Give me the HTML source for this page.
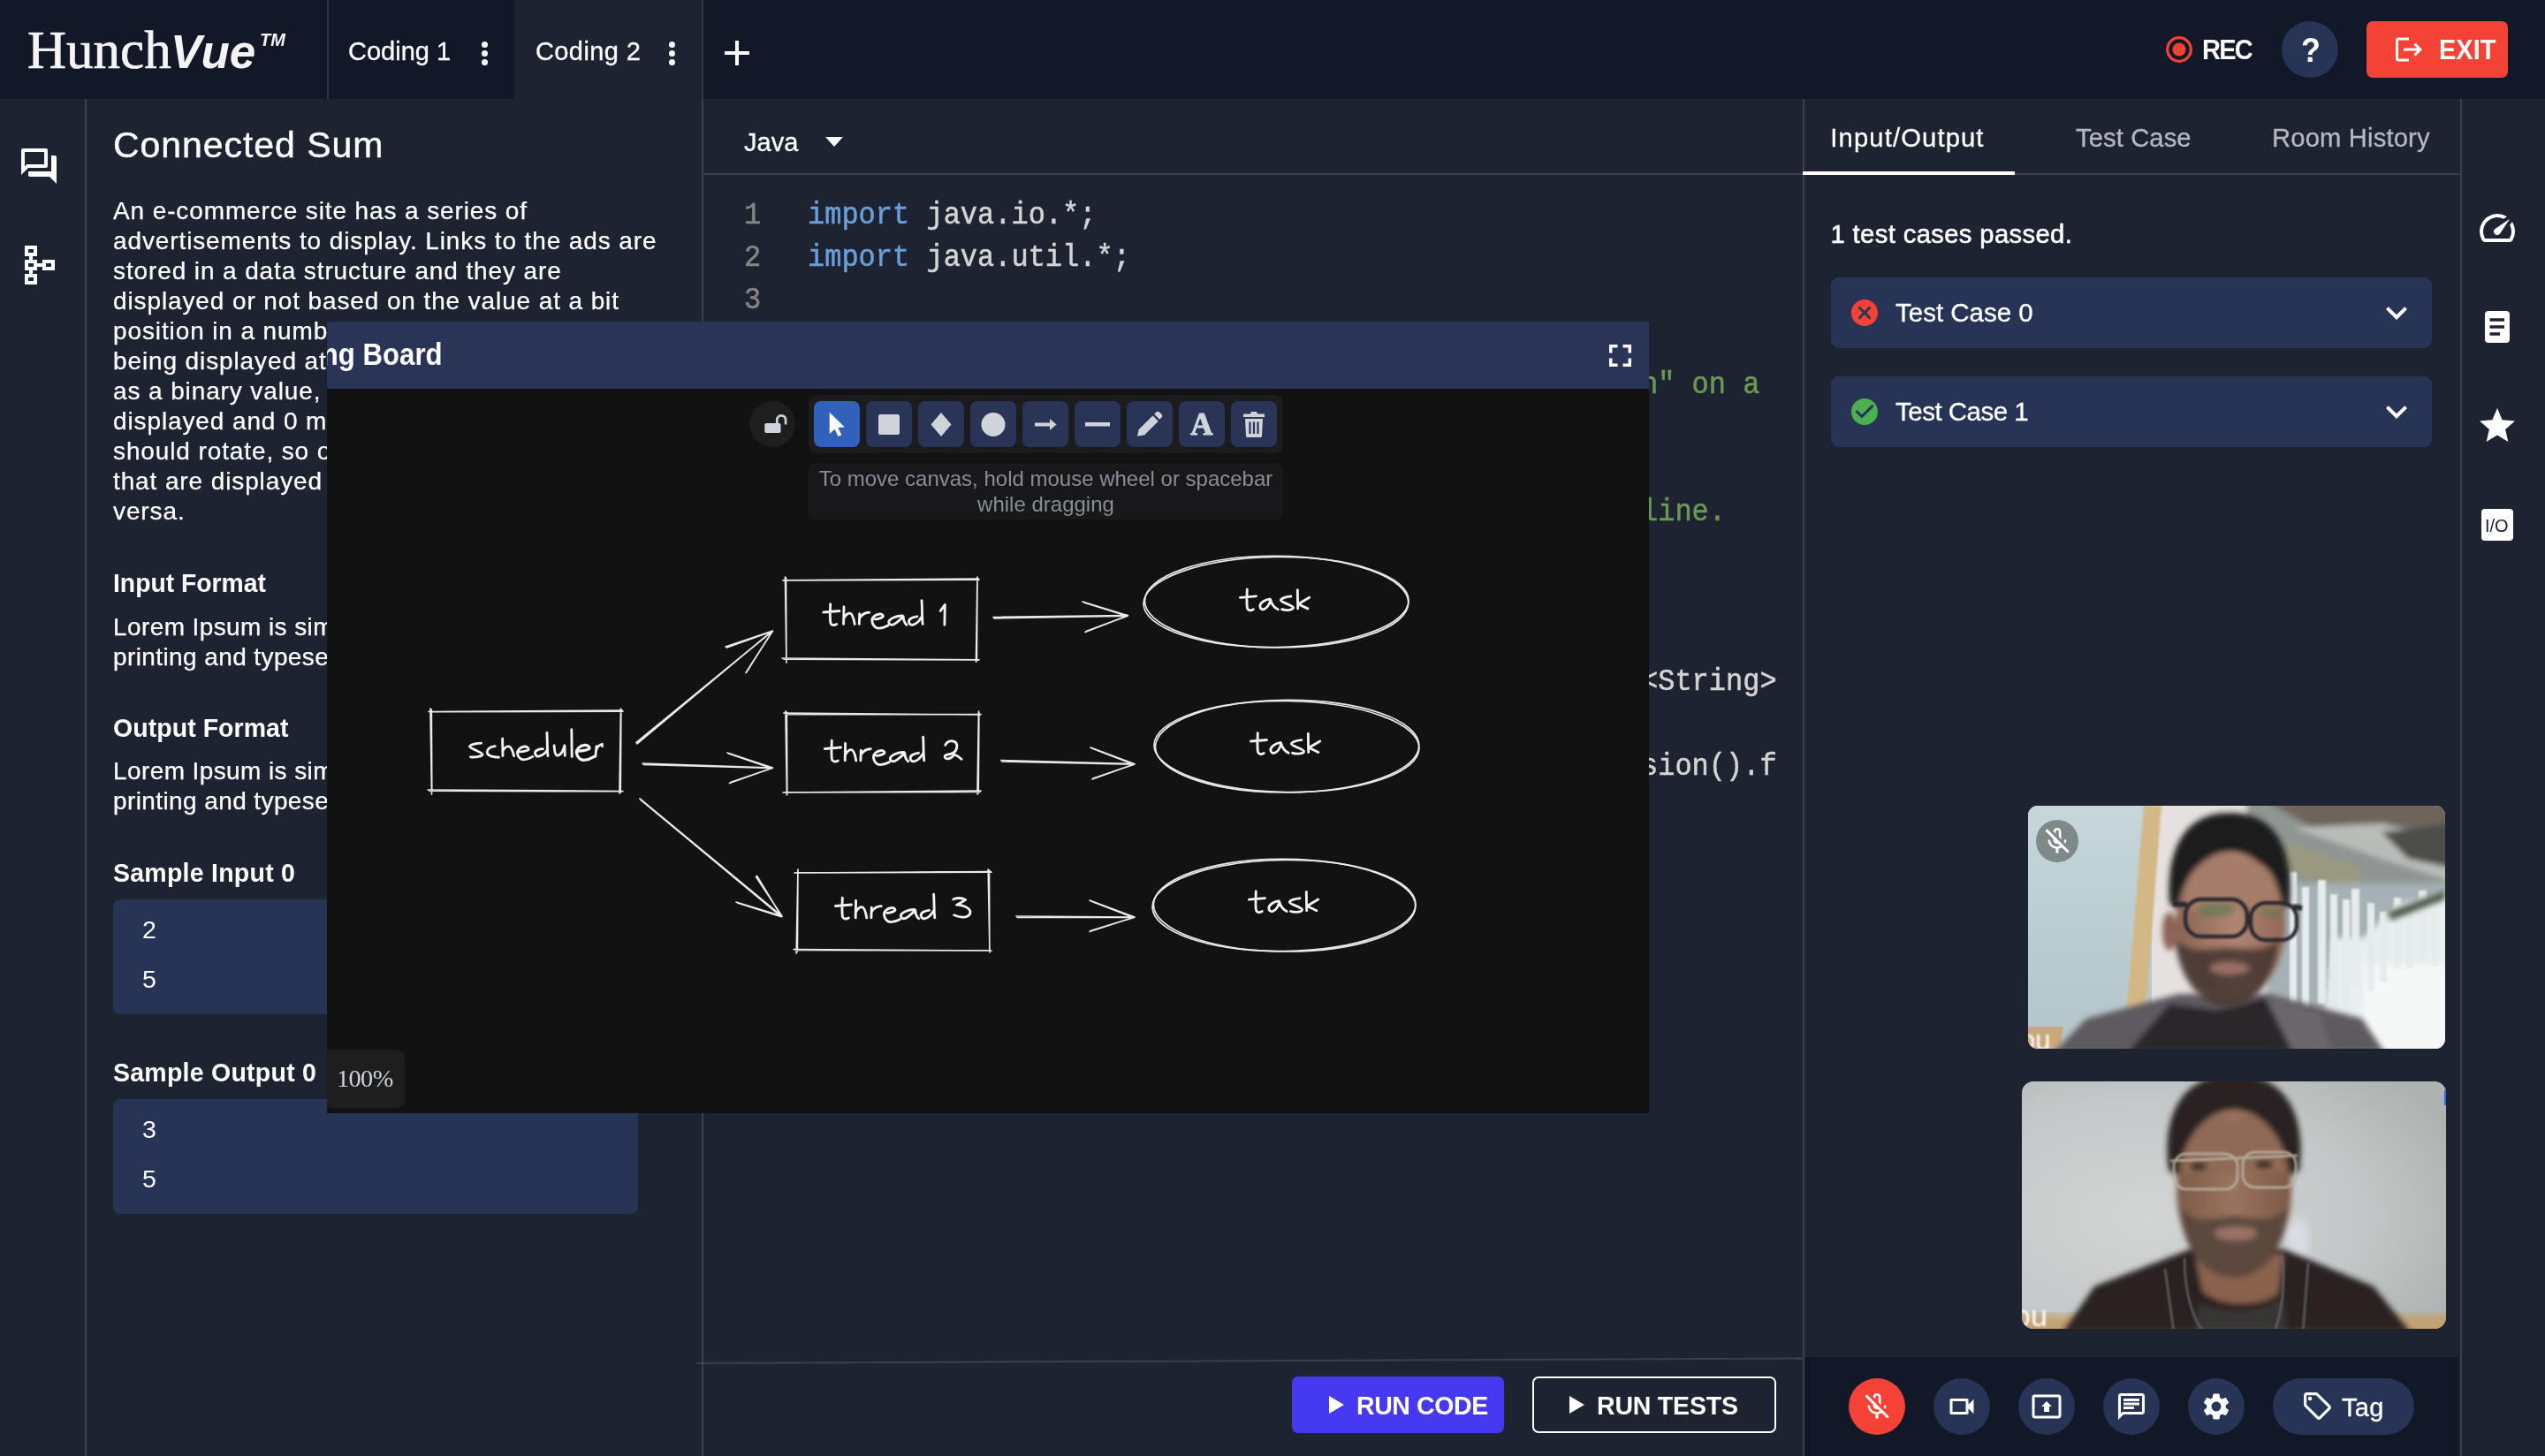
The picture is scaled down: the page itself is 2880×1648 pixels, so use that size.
<!DOCTYPE html>
<html>
<head>
<meta charset="utf-8">
<title>HunchVue</title>
<style>
*{box-sizing:border-box;margin:0;padding:0}
html,body{width:2880px;height:1648px;overflow:hidden;background:#1e2332;}
body{font-family:"Liberation Sans",sans-serif;color:#fff;position:relative}
#root{position:absolute;left:0;top:0;width:2880px;height:1648px;will-change:transform;transform:translateZ(0)}
.abs{position:absolute}
.t{position:absolute;white-space:nowrap;line-height:1}
/* top bar */
#topbar{left:0;top:0;width:2880px;height:112px;background:#121828}
#tab1{left:372px;top:0;width:210px;height:112px;background:#121828}
#tab2{left:582px;top:0;width:213px;height:112px;background:#1e2332}
.vline{position:absolute;width:2px;background:rgba(255,255,255,0.125)}
.hline{position:absolute;height:2px;background:rgba(255,255,255,0.125)}
.dot{position:absolute;width:7px;height:7px;border-radius:50%;background:#fff}
/* problem */
.ptxt{font-size:28px;line-height:34px;color:#fff;white-space:nowrap;-webkit-text-stroke:0.25px #fff}
.h3{font-size:28.5px;font-weight:bold;letter-spacing:0.25px;transform:scaleY(1.045);transform-origin:0 84.65%}
.sample{position:absolute;left:128px;width:594px;height:130px;background:#273456;border-radius:8px}
.sample span{position:absolute;left:33px;font-size:28.5px;line-height:1}
/* code */
.code{font-family:"Liberation Mono",monospace;font-size:32px;line-height:44.04px;white-space:pre;position:absolute;transform:scaleY(1.09);transform-origin:0 0;-webkit-text-stroke:0.5px currentColor}
.ln{color:#858585}
.kw{color:#6a9fd9}
.cm{color:#6a9955}
.tx{color:#d4d4d4}
/* right */
.tc{position:absolute;left:2072px;width:680px;height:80px;background:#273456;border-radius:9px}
.cbtn{position:absolute;width:64px;height:64px;border-radius:50%;background:#273456;top:1560px}
</style>
</head>
<body>
<div id="root">
<!-- TOP BAR -->
<div id="topbar" class="abs"></div>
<div id="tab1" class="abs"></div>
<div id="tab2" class="abs"></div>
<div class="vline" style="left:370px;top:0;height:112px"></div>
<div class="vline" style="left:794px;top:0;height:1648px"></div>

<!-- logo -->
<div class="t" id="logo1" style="left:31px;top:26px;font-family:'Liberation Serif',serif;font-size:61px;color:#f4f4f4;-webkit-text-stroke:0.7px #f4f4f4">Hunch</div>
<div class="t" id="logo2" style="left:193px;top:32px;font-size:53px;font-weight:bold;font-style:italic;color:#f4f4f4">Vue</div>
<div class="t" id="logo3" style="left:294px;top:35px;font-size:20px;font-weight:bold;font-style:italic;color:#f4f4f4">TM</div>

<div class="t" id="tabt1" style="left:394px;top:44px;font-size:29px;-webkit-text-stroke:0.3px #fff;">Coding 1</div>
<div class="dot" style="left:545px;top:47px"></div><div class="dot" style="left:545px;top:57px"></div><div class="dot" style="left:545px;top:67px"></div>
<div class="t" id="tabt2" style="left:606px;top:44px;font-size:29px;letter-spacing:0.4px;-webkit-text-stroke:0.3px #fff;">Coding 2</div>
<div class="dot" style="left:757px;top:47px"></div><div class="dot" style="left:757px;top:57px"></div><div class="dot" style="left:757px;top:67px"></div>
<div class="abs" style="left:820px;top:58px;width:28px;height:4px;background:#fff"></div>
<div class="abs" style="left:832px;top:46px;width:4px;height:28px;background:#fff"></div>


<!-- LEFT SIDEBAR -->
<div class="vline" style="left:96px;top:112px;height:1536px"></div>
<svg class="abs" id="ic_forum" style="left:20px;top:164px" width="48" height="48" viewBox="0 0 24 24"><path fill="#fff" d="M15 4v7H5.17L4 12.17V4h11m1-2H3c-.55 0-1 .45-1 1v14l4-4h10c.55 0 1-.45 1-1V3c0-.55-.45-1-1-1zm5 4h-2v9H6v2c0 .55.45 1 1 1h11l4 4V7c0-.55-.45-1-1-1z"/></svg>
<svg class="abs" id="ic_tree" style="left:24px;top:274px" width="44" height="52" viewBox="0 0 44 52"><g fill="none" stroke="#fff" stroke-width="4"><rect x="6" y="6" width="10" height="8"/><rect x="6" y="22" width="10" height="8"/><rect x="6" y="38" width="10" height="8"/><rect x="26" y="22" width="10" height="8"/><path d="M11 14v8M11 30v8M16 26h10"/></g></svg>

<!-- PROBLEM PANEL -->
<div class="t" id="ptitle" style="left:128px;top:143.5px;font-size:41px;letter-spacing:0.95px;-webkit-text-stroke:0.4px #fff">Connected Sum</div>
<div class="abs ptxt" id="para1" style="left:128px;top:222.2px;letter-spacing:0.885px">An e-commerce site has a series of<br>advertisements to display. Links to the ads are<br>stored in a data structure and they are<br>displayed or not based on the value at a bit<br>position in a number. The sequence of ads<br>being displayed at any time can be represented<br>as a binary value, where 1 means the ad is<br>displayed and 0 means it is hidden. The ads<br>should rotate, so on each cycle the ads<br>that are displayed are hidden and vice<br>versa.</div>
<div class="t h3" id="h_in" style="left:128px;top:646px;letter-spacing:0;font-size:28.3px">Input Format</div>
<div class="abs ptxt" id="para2" style="left:128px;top:692.6px;letter-spacing:0.4px">Lorem Ipsum is simply dummy text of the<br>printing and typesetting industry.</div>
<div class="t h3" id="h_out" style="left:128px;top:810px;letter-spacing:0.05px">Output Format</div>
<div class="abs ptxt" id="para3" style="left:128px;top:856.1px;letter-spacing:0.4px">Lorem Ipsum is simply dummy text of the<br>printing and typesetting industry.</div>
<div class="t h3" id="h_si" style="left:128px;top:973.9px">Sample Input 0</div>
<div class="sample" style="top:1018px"><span style="top:19.9px">2</span><span style="top:75.8px">5</span></div>
<div class="t h3" id="h_so" style="left:128px;top:1200px">Sample Output 0</div>
<div class="sample" style="top:1244px"><span style="top:20.4px">3</span><span style="top:75.8px">5</span></div>


<!-- EDITOR -->
<div class="t" id="java" style="left:842px;top:147.2px;font-size:29px;-webkit-text-stroke:0.3px #fff;">Java</div>
<svg class="abs" style="left:934px;top:155px" width="20" height="11" viewBox="0 0 20 11"><path d="M0 0h20L10 11z" fill="#fff"/></svg>
<div class="hline" style="left:796px;top:196px;width:1244px"></div>
<div class="code ln" id="ln1" style="left:842px;top:220px">1
2
3</div>
<div class="code tx" id="code1" style="left:914px;top:220px"><span class="kw">import</span> java.io.*;
<span class="kw">import</span> java.util.*;</div>
<div class="code cm" id="c5" style="left:1857px;top:412px">n" on a</div>
<div class="code cm" id="c8" style="left:1857px;top:556px">line.</div>
<div class="code tx" id="c12" style="left:1857px;top:748px">&lt;String&gt;</div>
<div class="code tx" id="c14" style="left:1857px;top:844px">sion().f</div>
<svg class="abs" style="left:780px;top:1530px" width="1270" height="20" viewBox="780 1530 1270 20"><line x1="788" y1="1543" x2="2040" y2="1537.500" stroke="#fff" stroke-opacity="0.125" stroke-width="2"/></svg>
<!-- run buttons -->
<div class="abs" id="runcode" style="left:1462px;top:1558px;width:240px;height:64px;background:#4539f2;border-radius:7px"></div>
<svg class="abs" style="left:1504px;top:1580px" width="17" height="20" viewBox="0 0 17 20"><path d="M0 0L17 10L0 20z" fill="#fff"/></svg>
<div class="t" id="rc_t" style="left:1535px;top:1576.8px;font-size:28.5px;font-weight:bold;letter-spacing:-0.4px;transform:scaleY(1.06);transform-origin:0 84.65%">RUN CODE</div>
<div class="abs" id="runtests" style="left:1734px;top:1558px;width:276px;height:64px;border:2px solid #fff;border-radius:7px"></div>
<svg class="abs" style="left:1776px;top:1580px" width="17" height="20" viewBox="0 0 17 20"><path d="M0 0L17 10L0 20z" fill="#fff"/></svg>
<div class="t" id="rt_t" style="left:1807px;top:1576.8px;font-size:28.5px;font-weight:bold;letter-spacing:-0.2px;transform:scaleY(1.06);transform-origin:0 84.65%">RUN TESTS</div>

<!-- WHITEBOARD -->
<div class="abs" id="wb" style="left:370px;top:364px;width:1496px;height:895.5px;background:#121212;overflow:hidden">
  <div class="abs" id="wbh" style="left:0;top:0;width:1496px;height:76px;background:#2a3456"></div>
  <div class="t" id="wbt" style="left:-91.5px;top:19.4px;font-size:35px;font-weight:bold;transform:scaleX(0.89);transform-origin:left">Drawing Board</div>
  <svg class="abs" style="left:1451px;top:26px" width="25" height="25" viewBox="0 0 25 25"><path d="M1.750 9.500V1.750H9.500M15.500 1.750H23.250V9.500M23.250 15.500V23.250H15.500M9.500 23.250H1.750V15.500" fill="none" stroke="#fff" stroke-width="3.500"/></svg>
  <!-- lock -->
  <div class="abs" style="left:478px;top:90px;width:52px;height:52px;border-radius:50%;background:#1e1e1e"></div>
  <svg class="abs" style="left:490px;top:101px" width="34" height="28" viewBox="0 0 34 28"><rect x="5.300" y="14" width="18.200" height="11" rx="1.800" fill="#ced4da"/><path d="M19.300 14.500V10.200a4.900 4.900 0 0 1 9.800 0V15.500" fill="none" stroke="#ced4da" stroke-width="2.700"/></svg>
  <!-- toolbar -->
  <div class="abs" style="left:545px;top:83px;width:537px;height:66px;border-radius:9px;background:#1c1c1e"></div>
  <svg class="abs" style="left:551px;top:90px" width="52" height="52" viewBox="0 0 52 52"><rect width="52" height="52" rx="8" fill="#3161bd"/><path d="M17.700 12.800L17.700 37L23.500 31.700L27.600 40L31.300 38.300L27.300 30L34.800 29.400Z" fill="#fff"/></svg><svg class="abs" style="left:610px;top:90px" width="52" height="52" viewBox="0 0 52 52"><rect width="52" height="52" rx="8" fill="#2a3456"/><rect x="14" y="15" width="24" height="23" rx="2" fill="#ced4da"/></svg><svg class="abs" style="left:669px;top:90px" width="52" height="52" viewBox="0 0 52 52"><rect width="52" height="52" rx="8" fill="#2a3456"/><path d="M26 13l11.500 13.500L26 40 14.500 26.500z" fill="#ced4da"/></svg><svg class="abs" style="left:728px;top:90px" width="52" height="52" viewBox="0 0 52 52"><rect width="52" height="52" rx="8" fill="#2a3456"/><circle cx="26" cy="26.500" r="13.500" fill="#ced4da"/></svg><svg class="abs" style="left:787px;top:90px" width="52" height="52" viewBox="0 0 52 52"><rect width="52" height="52" rx="8" fill="#2a3456"/><path d="M14 24.500h17v-4.500l7.500 6.500-7.500 6.500v-4.500h-17z" fill="#ced4da"/></svg><svg class="abs" style="left:846px;top:90px" width="52" height="52" viewBox="0 0 52 52"><rect width="52" height="52" rx="8" fill="#2a3456"/><rect x="12" y="24" width="28" height="4.500" fill="#ced4da"/></svg><svg class="abs" style="left:905px;top:90px" width="52" height="52" viewBox="0 0 52 52"><rect width="52" height="52" rx="8" fill="#2a3456"/><path d="M12 39.700l1.700-7.500 15.800-15.800 6.300 6.300-15.800 15.800zM31.200 14.700l2.300-2.300c1-1 2.500-1 3.500 0l2.500 2.500c1 1 1 2.500 0 3.500l-2.300 2.300z" fill="#ced4da"/></svg><svg class="abs" style="left:964px;top:90px" width="52" height="52" viewBox="0 0 52 52"><rect width="52" height="52" rx="8" fill="#2a3456"/><text x="26" y="38" text-anchor="middle" font-family="Liberation Serif" font-weight="bold" font-size="35" fill="#ced4da" stroke="#ced4da" stroke-width="1.100">A</text></svg><svg class="abs" style="left:1023px;top:90px" width="52" height="52" viewBox="0 0 52 52"><rect width="52" height="52" rx="8" fill="#2a3456"/><path d="M14 14.500h8l1-2.500h6l1 2.500h8v3.500h-24zM16 20h20l-1 19.500c0 1-1 1.500-2 1.500h-14c-1 0-2-.5-2-1.500z" fill="#ced4da"/><path d="M21.500 23.500v13.500M26 23.500v13.500M30.500 23.500v13.500" stroke="#2a3456" stroke-width="2.200"/></svg>
  <div class="abs" style="left:545px;top:160px;width:537px;height:64px;border-radius:8px;background:#18181a"></div>
  <div class="abs" id="hint" style="left:545px;top:164.2px;width:537px;text-align:center;font-size:24px;line-height:28.500px;color:#868e96">To move canvas, hold mouse wheel or spacebar<br>while dragging</div>
  <!-- zoom -->
  <div class="abs" style="left:0;top:824px;width:88px;height:66px;border-radius:0 9px 9px 0;background:#1e1e1e"></div>
  <div class="t" id="zoomt" style="left:11px;top:842.8px;font-family:'Liberation Serif',serif;font-size:28.3px;color:#ced4da;letter-spacing:-0.6px">100%</div>
  <svg class="abs" style="left:0;top:0" width="1496" height="894" viewBox="370 364 1496 894"><defs><path id="g_s" d="M14.5,-15.3 C8,-15 2,-13.500 1.500,-11.500 C1.500,-9.500 16,-5 16,-2.500 C16,-0.500 8,1 2.500,0.500"/><path id="g_c" d="M10.200,-11.800 C5,-11.500 1,-8 1.200,-5 C1.500,-1.500 5,0.500 14.500,0.800"/><path id="g_h" d="M0.800,-20.400 L1.200,-0.800 M1.200,-6.500 C3,-10 6,-12 8,-11.500 C11,-11 12.500,-6 13.800,-0.800"/><path id="g_e" d="M3.100,-5.500 C7,-5.800 12,-6.500 13.400,-7.900 C14,-10 11,-11.600 8.700,-11.400 C4,-11 0.500,-7 0.800,-3.900 C1.200,1 5,3.500 8,3.500 C12,3.300 15,2 18.100,0"/><path id="g_d" d="M10.600,-8.700 C6,-8.800 1.500,-7 1.600,-4 C1.800,-1 4,0 6,-0.400 C10,-1.500 13.500,-4.500 15.300,-7.100 M15,-27.100 C15.600,-18 15.200,-8 16.100,-0.800"/><path id="g_u" d="M0.800,-12.600 C1,-8 1.500,-3 3.500,-1.500 C6,-0.500 10,-3 12.600,-12.600 L13,-1.200"/><path id="g_l" d="M1.600,-30.600 L2,0"/><path id="g_r" d="M2,-11.800 L0.800,0 M1.600,-7.500 C3,-11 6,-14 8.300,-14.100 L8.600,-11.800"/><path id="g_t" d="M8.300,-23.600 C8,-15 7.500,-6 8.500,-2 C9.500,0.500 12,1 15.300,-0.800 M0.400,-14.200 L18.500,-15.700"/><path id="g_h2" d="M1.200,-20.400 L0.800,-0.800 M1,-7 C3,-11 6,-13.500 8,-13 C11,-12.500 12.500,-6 13.400,-0.800"/><path id="g_r2" d="M1.600,-12.600 L1.200,-0.800 M1.500,-7.500 C4,-11.500 8,-14 12.500,-14"/><path id="g_e2" d="M3.900,-6.300 C8,-6.500 12,-8 13.400,-9.400 C13.500,-11.500 11,-12.500 9.400,-12.200 C4,-11.500 0.500,-8 0.800,-4.700 C1.200,1 5,4 8.700,3.900 C12,3.700 16,2.500 18.900,0.800"/><path id="g_a" d="M16.500,-10.200 C10,-10.500 1,-7 0.800,-3.100 C1,0 4,0.500 6,-0.200 C10,-2 14,-6 17.300,-9.400 C17.500,-5 19,-1.500 21.200,0"/><path id="g_d2" d="M10.200,-9.400 C5,-9 0.800,-6.500 0.800,-3.500 C1,-0.500 3.500,0.500 5.500,0 C9,-1 13,-5 15,-8.600 M15.300,-27.500 C16,-18 15.500,-8 16.500,-0.800"/><path id="g_n1" d="M0.400,-15.700 L5.500,-22.800 L5.100,0"/><path id="g_n2" d="M1.400,-15.900 C3,-20 8,-21.500 11,-20 C15,-18.500 15.500,-14 13,-9.500 C11,-6 6,-5.500 2,-4.500 C-0.500,-3.500 1,0 4.500,-0.300 C8,-0.800 10,-3 11.500,-5.200 C14,-4.500 17,-2.500 19.700,0"/><path id="g_n3" d="M1,-20.700 C4,-22.500 10,-22.800 14.900,-20.200 C11,-17.500 7,-15.500 4.800,-14.400 C10,-14.500 19,-12 20.200,-6.700 C20.500,-2 15,0 11,-0.500 C7,-1 4,-2 1.900,-2.900"/><path id="g_ta" d="M11.300,-12.500 C6,-12 0.500,-8 0.400,-4.800 C0.500,-1 3,-0.500 5,-1 C8,-2 11,-6.500 12.100,-10.400 M12,-12.500 C13.500,-7 17,-2.500 20.800,-0.900"/><path id="g_ts" d="M12.500,-15.600 C8,-15.500 1.500,-13.500 0.900,-11.200 C1,-9 14.500,-5.500 15.100,-3 C15.500,-0.500 8,1 2.200,-0.900"/><path id="g_k" d="M0.900,-22.900 L1.300,-1.700 M14.300,-14.300 L1.700,-6.900 L12.500,-1.700"/></defs>
<g fill="none" stroke="#e9e9e9" stroke-width="1.700" stroke-linecap="round" stroke-linejoin="round"><path d="M485,805.5 L704,804 M702.5,802 L701,898 M705,895.5 L484,894 M488.5,899 L487,802 M487,805.75 L705,805.1 M702.85,803 L702.2,897 M704,895.75 L486,895.2 M488.75,897 L488.3,803"/><path d="M886,656.8 L1107,655 M1106,653 L1104.5,749 M1108,746.8 L885,745 M890,750 L888.5,653 M888,656.84 L1108,656.1 M1106.0,654 L1105.35,748 M1107,746.84 L887,746.2 M889.9,748 L889.45,654"/><path d="M887,807.2 L1109,809 M1107.5,805 L1106,899 M1110,895.2 L886,897 M890.5,900 L889,805 M889,808.36 L1110,808.6999999999999 M1107.8500000000001,806 L1107.2,898 M1109,896.36 L888,896.8 M890.75,898 L890.3000000000001,806"/><path d="M899,988 L1121,986.5 M1118.2,984 L1120,1078 M1122,1076 L898,1074.5 M901.2,1079 L903,984 M901,987.9 L1122,987.25 M1119.46,985 L1119.8,1077 M1121,1075.8999999999999 L900,1075.35 M902.36,1077 L902.9,985"/><ellipse cx="1444" cy="681.5" rx="150" ry="51" transform="rotate(-0.8 1444 681.5)"/><ellipse cx="1444.6" cy="681.2" rx="149.2" ry="51.8" transform="rotate(0.4 1444 681.5)"/><ellipse cx="1456" cy="845" rx="150" ry="51.5" transform="rotate(0.7 1456 845)"/><ellipse cx="1456.6" cy="844.7" rx="149.2" ry="52.3" transform="rotate(-0.35 1456 845)"/><ellipse cx="1453" cy="1025" rx="149" ry="51.5" transform="rotate(-0.7 1453 1025)"/><ellipse cx="1453.6" cy="1024.7" rx="148.2" ry="52.3" transform="rotate(0.35 1453 1025)"/><path d="M720,840.5 L874.5,714 M721,841.8 L873.5,714.4 M821,732 L874.5,714 L844,761.5 M822.5,733 L873.5,714.6 M845,760.5 L874.0,714.4"/><path d="M727,864 L874.5,869 M728,865.3 L873.5,869.4 M823,852 L874.5,869 L825.5,886.5 M824.5,853 L873.5,869.6 M826.5,885.5 L874.0,869.4"/><path d="M724,904 L885,1037 M725,905.3 L884,1037.4 M833,1021 L885,1037 L855.6,992.5 M834.5,1022 L884,1037.6 M856.6,991.5 L884.5,1037.4"/><path d="M1124,698.5 L1276.4,696.7 M1125,699.8 L1275.4,697.1 M1225,681 L1276.4,696.7 L1228,715.5 M1226.5,682 L1275.4,697.3000000000001 M1229,714.5 L1275.9,697.1"/><path d="M1132.6,860.5 L1284,864.7 M1133.6,861.8 L1283,865.1 M1234,846 L1284,864.7 L1236,882 M1235.5,847 L1283,865.3000000000001 M1237,881 L1283.5,865.1"/><path d="M1150,1037 L1284,1038 M1151,1038.3 L1283,1038.4 M1233,1019 L1284,1038 L1233,1054.5 M1234.5,1020 L1283,1038.6 M1234,1053.5 L1283.5,1038.4"/></g>
<g fill="none" stroke="#f2f2f2" stroke-width="2.850" stroke-linecap="round" stroke-linejoin="round"><g transform="translate(530,856.4)"><use href="#g_s" transform="translate(0,0)"/><use href="#g_c" transform="translate(20,0)"/><use href="#g_h" transform="translate(37.8,0)"/><use href="#g_e" transform="translate(54.7,0)"/><use href="#g_d" transform="translate(73.9,0)"/><use href="#g_u" transform="translate(96.3,0)"/><use href="#g_l" transform="translate(115.2,0)"/><use href="#g_e" transform="translate(121.5,0) scale(1.15)"/><use href="#g_r" transform="translate(143,0)"/></g><g transform="translate(931.4,707.2)"><use href="#g_t" transform="translate(0,0)"/><use href="#g_h2" transform="translate(22.4,0)"/><use href="#g_r2" transform="translate(39.7,0)"/><use href="#g_e2" transform="translate(54.6,0)"/><use href="#g_a" transform="translate(73.5,0)"/><use href="#g_d2" transform="translate(96.3,0)"/><use href="#g_n1" transform="translate(132.4,0)"/></g><g transform="translate(933,861.7)"><use href="#g_t" transform="translate(0,0)"/><use href="#g_h2" transform="translate(22.4,0)"/><use href="#g_r2" transform="translate(39.7,0)"/><use href="#g_e2" transform="translate(54.6,0)"/><use href="#g_a" transform="translate(73.5,0)"/><use href="#g_d2" transform="translate(96.3,0)"/></g><g transform="translate(1068.4,859.2)"><use href="#g_n2" transform="translate(0,0)"/></g><g transform="translate(945,1039.7)"><use href="#g_t" transform="translate(0,0)"/><use href="#g_h2" transform="translate(22.4,0)"/><use href="#g_r2" transform="translate(39.7,0)"/><use href="#g_e2" transform="translate(54.6,0)"/><use href="#g_a" transform="translate(73.5,0)"/><use href="#g_d2" transform="translate(96.3,0)"/></g><g transform="translate(1077.8,1038.6)"><use href="#g_n3" transform="translate(0,0)"/></g><g transform="translate(1403,690.6)"><use href="#g_t" transform="translate(0,0)"/><use href="#g_ta" transform="translate(22.4,0)"/><use href="#g_ts" transform="translate(45.4,0)"/><use href="#g_k" transform="translate(64.4,0)"/></g><g transform="translate(1415,853.2)"><use href="#g_t" transform="translate(0,0)"/><use href="#g_ta" transform="translate(22.4,0)"/><use href="#g_ts" transform="translate(45.4,0)"/><use href="#g_k" transform="translate(64.4,0)"/></g><g transform="translate(1413,1032.4)"><use href="#g_t" transform="translate(0,0)"/><use href="#g_ta" transform="translate(22.4,0)"/><use href="#g_ts" transform="translate(45.4,0)"/><use href="#g_k" transform="translate(64.4,0)"/></g></g>
</svg>
</div>


<!-- TOP RIGHT -->
<svg class="abs" style="left:2450px;top:40px" width="32" height="32" viewBox="0 0 32 32"><circle cx="16" cy="16" r="13.3" fill="none" stroke="#f44336" stroke-width="3.2"/><circle cx="16" cy="16" r="7.6" fill="#f44336"/></svg>
<div class="t" id="rec" style="left:2492px;top:42.8px;font-size:29px;font-weight:bold;letter-spacing:-1.8px;transform:scaleY(1.06);transform-origin:0 84.65%">REC</div>
<div class="abs" style="left:2582px;top:24px;width:64px;height:64px;border-radius:50%;background:#273456"></div>
<div class="t" id="qm" style="left:2603px;top:36.5px;font-size:39px;font-weight:bold;transform:scaleX(0.92)">?</div>
<div class="abs" id="exit" style="left:2678px;top:24px;width:160px;height:64px;background:#f44336;border-radius:7px"></div>
<svg class="abs" style="left:2708px;top:38px" width="36" height="36" viewBox="0 0 24 24"><path fill="#fff" d="M17 7l-1.41 1.41L18.17 11H8v2h10.17l-2.58 2.58L17 17l5-5zM4 5h8V3H4c-1.1 0-2 .9-2 2v14c0 1.1.9 2 2 2h8v-2H4V5z"/></svg>
<div class="t" id="exit_t" style="left:2760px;top:42.8px;font-size:29px;font-weight:bold;transform:scaleY(1.06);transform-origin:0 84.65%">EXIT</div>

<!-- RIGHT PANEL -->
<div class="vline" style="left:2040px;top:112px;height:1536px"></div>
<div class="vline" style="left:2784px;top:112px;height:1536px"></div>
<div class="hline" style="left:2042px;top:196px;width:742px"></div>
<div class="abs" style="left:2040px;top:194px;width:240px;height:4px;background:#fff"></div>
<div class="t" id="tab_io" style="left:2071.3px;top:142.3px;font-size:29.2px;letter-spacing:1.14px;-webkit-text-stroke:0.3px #fff;">Input/Output</div>
<div class="t" id="tab_tc" style="left:2349px;top:142.3px;font-size:29.2px;color:#b4b8c0;letter-spacing:0.1px;-webkit-text-stroke:0.3px #b4b8c0">Test Case</div>
<div class="t" id="tab_rh" style="left:2571px;top:142.3px;font-size:29.2px;color:#b4b8c0;letter-spacing:0.16px;-webkit-text-stroke:0.3px #b4b8c0">Room History</div>
<div class="t" id="passed" style="left:2071.5px;top:251.2px;font-size:29.2px;letter-spacing:0.38px;-webkit-text-stroke:0.55px #fff">1 test cases passed.</div>
<div class="tc" style="top:314px"></div>
<svg class="abs" style="left:2092px;top:336px" width="36" height="36" viewBox="0 0 24 24"><path fill="#f44336" d="M12 2C6.47 2 2 6.47 2 12s4.47 10 10 10 10-4.47 10-10S17.53 2 12 2zm5 13.59L15.59 17 12 13.41 8.41 17 7 15.59 10.59 12 7 8.41 8.41 7 12 10.59 15.59 7 17 8.41 13.41 12 17 15.59z"/></svg>
<div class="t" id="tc0" style="left:2145px;top:338.5px;font-size:29.5px;letter-spacing:0px;-webkit-text-stroke:0.3px #fff;">Test Case 0</div>
<svg class="abs" style="left:2688px;top:330px" width="48" height="48" viewBox="0 0 24 24"><path fill="#fff" d="M16.59 8.59L12 13.17 7.41 8.59 6 10l6 6 6-6z"/></svg>
<div class="tc" style="top:426px"></div>
<svg class="abs" style="left:2092px;top:448px" width="36" height="36" viewBox="0 0 24 24"><path fill="#4caf50" d="M12 2C6.48 2 2 6.48 2 12s4.48 10 10 10 10-4.48 10-10S17.52 2 12 2zm-2 15l-5-5 1.41-1.41L10 14.17l7.59-7.59L19 8l-9 9z"/></svg>
<div class="t" id="tc1" style="left:2145px;top:450.5px;font-size:29.5px;letter-spacing:-0.5px;-webkit-text-stroke:0.3px #fff;">Test Case 1</div>
<svg class="abs" style="left:2688px;top:442px" width="48" height="48" viewBox="0 0 24 24"><path fill="#fff" d="M16.59 8.59L12 13.17 7.41 8.59 6 10l6 6 6-6z"/></svg>


<svg class="abs" id="vid1" style="left:2295px;top:912px;border-radius:11px" width="472" height="275" viewBox="0 0 472 275">
<defs>
<filter id="b3" x="-10%" y="-10%" width="120%" height="120%"><feGaussianBlur stdDeviation="3"/></filter>
<filter id="b6" x="-10%" y="-10%" width="120%" height="120%"><feGaussianBlur stdDeviation="6"/></filter>
<filter id="b1" x="-10%" y="-10%" width="120%" height="120%"><feGaussianBlur stdDeviation="1.200"/></filter>
<linearGradient id="glassL" x1="0" y1="0" x2="0" y2="1"><stop offset="0" stop-color="#c6d6da"/><stop offset="1" stop-color="#b3c5ca"/></linearGradient>
<linearGradient id="skin1" x1="0" y1="0" x2="1" y2="0"><stop offset="0" stop-color="#8a6353"/><stop offset="0.550" stop-color="#b08673"/><stop offset="1" stop-color="#8f6655"/></linearGradient>
</defs>
<rect width="472" height="275" fill="#e6e1e0"/>
<rect width="140" height="275" fill="url(#glassL)"/>
<path d="M131 0L151 0L130 275L108 275z" fill="#d3b786" filter="url(#b1)"/>
<path d="M0 250L40 250L36 275L0 275z" fill="#c9a97c"/>
<!-- ceiling -->
<g filter="url(#b3)">
<rect x="248" y="-5" width="230" height="100" fill="#8f9593"/>
<path d="M270 -5L478 -5L478 30L400 22L330 30z" fill="#6d655b"/>
<path d="M300 25L400 60L478 85L478 40L400 20z" fill="#b9bcb8"/>
<path d="M400 30L478 20L478 70L430 60z" fill="#4e4d4c"/>
<path d="M290 40L380 70L370 95L290 75z" fill="#9a987f"/>
<!-- frosted glass w/ stripes -->
<rect x="270" y="88" width="210" height="190" fill="#a6b1b5"/>
<path d="M330 275L345 150L380 150L420 110L478 100L478 275z" fill="#e9eeee"/>
<rect x="380" y="180" width="100" height="100" fill="#f6f8f8"/>
</g>
<g fill="#e6ecee" filter="url(#b1)">
<rect x="296" y="75" width="8" height="150"/><rect x="310" y="92" width="8" height="140"/><rect x="328" y="84" width="9" height="140"/><rect x="342" y="100" width="8" height="130"/><rect x="356" y="106" width="8" height="130"/><rect x="366" y="94" width="9" height="110"/><rect x="384" y="110" width="8" height="100"/><rect x="398" y="120" width="8" height="80"/><rect x="414" y="104" width="8" height="80"/><rect x="428" y="114" width="7" height="70"/><rect x="442" y="96" width="9" height="80"/><rect x="456" y="122" width="8" height="60"/>
</g>
<path d="M408 120L472 96L472 106L410 130z" fill="#4b5a4a" filter="url(#b3)"/>
<!-- jacket & shirt -->
<g filter="url(#b3)">
<path d="M28 280L66 241L170 213L273 213L378 241L404 280z" fill="#5e5a60"/>
<path d="M112 280L160 224L212 231L270 217L304 280z" fill="#29282b"/>
<path d="M300 280L268 216L290 222L330 236L345 280z" fill="#6a666c"/>
</g>
<!-- head -->
<g filter="url(#b3)">
<path d="M160 110C156 50 176 8 228 8C282 8 300 50 296 112L284 120L172 120z" fill="#1d1b1d"/>
<ellipse cx="229" cy="136" rx="62" ry="84" fill="url(#skin1)"/>

<path d="M176 118C174 80 190 58 230 58C270 58 286 80 284 118z" fill="#a57c69"/>
<ellipse cx="160" cy="142" rx="8" ry="22" fill="#8d6454"/>
<path d="M166 150C170 200 200 228 226 228C254 228 280 200 284 150C270 166 250 162 228 160C204 162 182 168 166 150z" fill="#4a3a35" opacity="0.920"/>
<ellipse cx="228" cy="184" rx="22" ry="7" fill="#9a7064"/>
</g>
<g fill="none" stroke="#2d2b30" stroke-width="4.500" filter="url(#b1)">
<rect x="178" y="106" width="70" height="42" rx="18"/><rect x="252" y="110" width="52" height="42" rx="17"/><path d="M164 111L180 112M300 114L310 116" stroke-width="6"/>
</g>
<ellipse cx="213" cy="118" rx="20" ry="8" fill="#4f7a4a" opacity="0.550" filter="url(#b3)"/>
<ellipse cx="276" cy="120" rx="14" ry="6" fill="#4f7a4a" opacity="0.400" filter="url(#b3)"/>
<!-- name label -->
<text x="-9" y="276" font-family="Liberation Sans" font-size="31" fill="#fff" filter="url(#b1)">ou</text>
<!-- mic badge -->
<circle cx="33" cy="40" r="24" fill="#7f8989"/>
<g transform="translate(15,22) scale(1.500)"><path fill="#fff" d="M10.800 4.900c0-.66.54-1.200 1.200-1.200s1.200.54 1.200 1.200l-.01 3.910L15 10.600V5c0-1.660-1.340-3-3-3-1.540 0-2.790 1.160-2.960 2.650l1.760 1.760V4.900zM19 11h-1.700c0 .58-.1 1.130-.27 1.640l1.270 1.270c.44-.88.7-1.870.7-2.910zM4.410 2.860L3 4.270l6 6V11c0 1.660 1.340 3 3 3 .23 0 .44-.03.65-.08l1.660 1.660c-.71.33-1.500.52-2.310.52-2.760 0-5.300-2.100-5.300-5.100H5c0 3.410 2.720 6.230 6 6.720V21h2v-3.280c.91-.13 1.770-.45 2.550-.9l4.200 4.200 1.410-1.410L4.410 2.860z"/></g>
</svg>

<svg class="abs" id="vid2" style="left:2288px;top:1224px;border-radius:13px" width="480" height="280" viewBox="0 0 480 280">
<defs>
<radialGradient id="bg2" cx="0.300" cy="0.550" r="0.800"><stop offset="0" stop-color="#d3d5d4"/><stop offset="0.600" stop-color="#c4c8c8"/><stop offset="1" stop-color="#aeb2b0"/></radialGradient>
<linearGradient id="skin2" x1="0" y1="0" x2="1" y2="0"><stop offset="0" stop-color="#7d5a48"/><stop offset="0.500" stop-color="#9a745e"/><stop offset="1" stop-color="#7c5947"/></linearGradient>
</defs>
<rect width="480" height="280" fill="url(#bg2)"/>
<rect x="-10" y="264" width="500" height="30" fill="#c3a070" filter="url(#b6)"/>
<ellipse cx="312" cy="180" rx="13" ry="26" fill="#dcdce6" filter="url(#b6)"/>
<g filter="url(#b3)">
<path d="M46 284L82 232L190 190L297 190L398 232L440 284z" fill="#2a2322"/>
<path d="M196 196L296 196L290 240C270 256 220 256 204 236z" fill="#8a624e"/>
<path d="M200 250C230 264 270 262 296 244L300 284L196 284z" fill="#383536"/>
<path d="M166 100C158 40 180 -8 240 -8C300 -8 322 40 314 100L300 110L180 110z" fill="#2a2221"/>
<ellipse cx="240" cy="124" rx="65" ry="92" fill="url(#skin2)"/>

<path d="M184 104C182 64 200 42 240 42C282 42 298 64 296 104z" fill="#8f6b57"/>
<path d="M178 140C182 196 210 222 240 222C270 222 298 196 302 140C290 160 268 156 240 152C212 156 192 162 178 140z" fill="#56453c" opacity="0.900"/>
<ellipse cx="242" cy="172" rx="24" ry="8" fill="#9a7266"/>
<ellipse cx="200" cy="96" rx="10" ry="5" fill="#3a2c28"/><ellipse cx="274" cy="94" rx="10" ry="5" fill="#3a2c28"/>
</g>
<g fill="none" stroke="#b9b3a4" stroke-width="3" filter="url(#b1)" opacity="0.850">
<rect x="172" y="82" width="72" height="40" rx="14"/><rect x="250" y="80" width="60" height="40" rx="14"/><path d="M168 90L312 84"/>
</g>
<g fill="none" stroke="#6d6a70" stroke-width="2" filter="url(#b1)"><path d="M184 200C184 240 194 270 206 284M294 196C300 236 292 266 286 284M162 212L172 284M324 206L318 284"/></g>
<text x="-9" y="277" font-family="Liberation Sans" font-size="34" fill="#fff" filter="url(#b1)">ou</text>
<rect x="478" y="10" width="3" height="17" fill="#2a6cf0"/>
</svg>


<!-- call bar -->
<div class="abs" style="left:2042px;top:1536px;width:740px;height:112px;background:#121828"></div>
<div class="cbtn" style="left:2092px;background:#f44336"></div>
<svg class="abs" style="left:2106px;top:1574px" width="36" height="36" viewBox="0 0 24 24"><path fill="#fff" d="M10.8 4.9c0-.66.54-1.2 1.2-1.2s1.2.54 1.2 1.2l-.01 3.91L15 10.6V5c0-1.66-1.34-3-3-3-1.54 0-2.79 1.16-2.96 2.65l1.76 1.76V4.9zM19 11h-1.7c0 .58-.1 1.13-.27 1.64l1.27 1.27c.44-.88.7-1.87.7-2.91zM4.41 2.86L3 4.27l6 6V11c0 1.66 1.34 3 3 3 .23 0 .44-.03.65-.08l1.66 1.66c-.71.33-1.5.52-2.31.52-2.76 0-5.3-2.1-5.3-5.1H5c0 3.410 2.720 6.230 6 6.720V21h2v-3.280c.91-.13 1.77-.45 2.55-.9l4.2 4.2 1.410-1.410L4.410 2.860z"/></svg>
<div class="cbtn" style="left:2188px"></div>
<svg class="abs" style="left:2202px;top:1574px" width="36" height="36" viewBox="0 0 24 24"><path fill="#fff" d="M15 8v8H5V8h10m1-2H4c-.55 0-1 .45-1 1v10c0 .55.45 1 1 1h12c.55 0 1-.45 1-1v-3.5l4 4v-11l-4 4V7c0-.55-.45-1-1-1z"/></svg>
<div class="cbtn" style="left:2284px"></div>
<svg class="abs" style="left:2298px;top:1574px" width="36" height="36" viewBox="0 0 24 24"><path fill="#fff" d="M21 3H3c-1.11 0-2 .89-2 2v14c0 1.11.89 2 2 2h18c1.11 0 2-.89 2-2V5c0-1.11-.89-2-2-2zm0 16.020H3V4.980h18v14.040zM10 12H8l4-4 4 4h-2v4h-4v-4z"/></svg>
<div class="cbtn" style="left:2380px"></div>
<svg class="abs" style="left:2394px;top:1574px" width="36" height="36" viewBox="0 0 24 24"><path fill="#fff" d="M4 4h16v12H5.170L4 17.170V4m0-2c-1.100 0-1.990.9-1.990 2L2 22l4-4h14c1.100 0 2-.9 2-2V4c0-1.100-.9-2-2-2H4zm2 10h8v2H6v-2zm0-3h12v2H6V9zm0-3h12v2H6V6z"/></svg>
<div class="cbtn" style="left:2476px"></div>
<svg class="abs" style="left:2490px;top:1574px" width="36" height="36" viewBox="0 0 24 24"><path fill="#fff" d="M19.14 12.94c.04-.3.06-.61.06-.94 0-.32-.02-.64-.07-.94l2.030-1.580c.18-.14.23-.41.12-.61l-1.920-3.320c-.12-.22-.37-.29-.59-.22l-2.390.96c-.5-.38-1.030-.7-1.620-.94l-.36-2.540c-.04-.24-.24-.41-.48-.41h-3.840c-.24 0-.43.17-.47.41l-.36 2.540c-.59.24-1.130.57-1.620.94l-2.390-.96c-.22-.08-.47 0-.59.22L2.740 8.870c-.12.21-.08.47.12.61l2.030 1.580c-.05.3-.09.63-.09.94s.02.64.07.94l-2.030 1.580c-.18.14-.23.41-.12.61l1.920 3.320c.12.22.37.29.59.22l2.390-.96c.5.38 1.030.7 1.620.94l.36 2.540c.05.24.24.41.48.41h3.840c.24 0 .44-.17.47-.41l.36-2.540c.59-.24 1.130-.56 1.620-.94l2.390.96c.22.08.47 0 .59-.22l1.920-3.320c.12-.22.07-.47-.12-.61l-2.010-1.580zM12 15.600c-1.980 0-3.600-1.620-3.600-3.600s1.620-3.600 3.600-3.600 3.600 1.620 3.600 3.600-1.620 3.600-3.600 3.600z"/></svg>
<div class="abs" style="left:2572px;top:1560px;width:160px;height:64px;border-radius:32px;background:#273456"></div>
<svg class="abs" style="left:2604px;top:1573px" width="37" height="37" viewBox="0 0 24 24"><path fill="#fff" d="M21.41 11.58l-9-9C12.05 2.22 11.55 2 11 2H4c-1.100 0-2 .9-2 2v7c0 .55.22 1.050.59 1.420l9 9c.36.36.86.58 1.410.58s1.050-.22 1.410-.59l7-7c.37-.36.59-.86.59-1.410s-.23-1.060-.59-1.420zM13 20.010L4 11V4h7v-.01l9 9-7 7.020z"/><circle cx="6.500" cy="6.500" r="1.500" fill="#fff"/></svg>
<div class="t" id="tag_t" style="left:2650px;top:1578.5px;font-size:29px;letter-spacing:0.3px;-webkit-text-stroke:0.3px #fff;">Tag</div>

<!-- RIGHT ICON BAR -->
<svg class="abs" style="left:2802px;top:234px" width="48" height="48" viewBox="0 0 24 24"><path fill="#fff" d="M20.38 8.57l-1.23 1.850a8 8 0 0 1-.22 7.580H5.070A8 8 0 0 1 15.580 6.850l1.850-1.230A10 10 0 0 0 3.350 19a2 2 0 0 0 1.720 1h13.850a2 2 0 0 0 1.740-1 10 10 0 0 0-.27-10.440zm-9.790 6.840a2 2 0 0 0 2.830 0l5.660-8.490-8.490 5.660a2 2 0 0 0 0 2.830z"/></svg>
<svg class="abs" style="left:2812px;top:352px" width="28" height="36" viewBox="0 0 28 36"><rect width="28" height="36" rx="4" fill="#fff"/><path d="M5.500 10h16.500M5.500 18h16.500M5.500 26h11.500" stroke="#1e2332" stroke-width="3.500"/></svg>
<svg class="abs" style="left:2802px;top:458px" width="48" height="48" viewBox="0 0 24 24"><path fill="#fff" d="M12 17.270L18.180 21l-1.640-7.030L22 9.240l-7.190-.61L12 2 9.190 8.630 2 9.240l5.460 4.730L5.820 21z"/></svg>
<div class="abs" style="left:2808px;top:576px;width:36px;height:36px;border-radius:4px;background:#fff"></div>
<div class="t" id="io_t" style="left:2812px;top:585px;font-size:20px;color:#1e2332">I/O</div>


<div id="main"></div>
</div>
</body>
</html>
